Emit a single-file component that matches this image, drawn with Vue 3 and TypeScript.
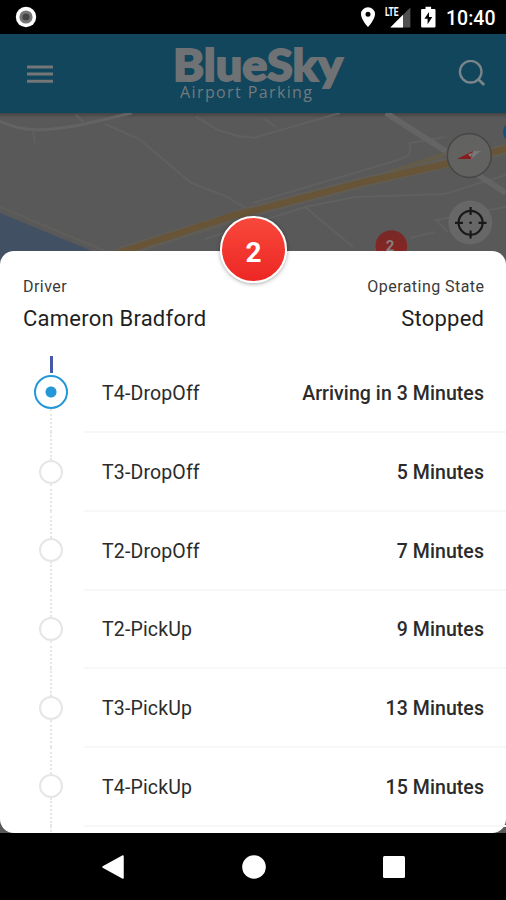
<script setup lang="ts">
interface Stop {
  name: string
  eta: string
}

const stops: Stop[] = [
  { name: 'T4-DropOff', eta: 'Arriving in 3 Minutes' },
  { name: 'T3-DropOff', eta: '5 Minutes' },
  { name: 'T2-DropOff', eta: '7 Minutes' },
  { name: 'T2-PickUp', eta: '9 Minutes' },
  { name: 'T3-PickUp', eta: '13 Minutes' },
  { name: 'T4-PickUp', eta: '15 Minutes' },
]
</script>

<template>
  <div class="screen">
    <div class="status">
      <svg class="record" width="22" height="22" viewBox="0 0 22 22">
        <circle cx="11" cy="11" r="10.2" fill="#fff" />
        <circle cx="11" cy="11" r="6.6" fill="#777" />
        <circle cx="11" cy="11" r="3.6" fill="#444" />
      </svg>
      <div class="status-right">
        <svg width="80" height="34" viewBox="0 0 80 34">
          <path d="M8 7.2a7 7 0 0 0-7 7c0 5.2 7 12.9 7 12.9s7-7.7 7-12.9a7 7 0 0 0-7-7zm0 9.5a2.500 2.500 0 1 1 0-5 2.500 2.500 0 0 1 0 5z" fill="#fff" />
          <path d="M50.400 7.400V27.500H30.300z" fill="#505050" />
          <path d="M43 14.800V27.500H30.300z" fill="#fff" />
          <path d="M24 6h15v11H24z" fill="#000" />
          <text x="25" y="15.900" class="lte" textLength="13.500" lengthAdjust="spacingAndGlyphs">LTE</text>
          <path d="M65.500 6.700h5.600v2.200h3.200q1.200 0 1.200 1.200v16.200q0 1.200-1.200 1.200H62.300q-1.200 0-1.200-1.200V10.100q0-1.200 1.200-1.200h3.200z" fill="#fff" />
          <path d="M69 12l-4.600 6.800h3.200v5.500l4.700-7.300h-3.300z" fill="#000" />
        </svg>
        <span class="clock">10:40</span>
      </div>
    </div>

    <header class="bar">
      <svg width="26" height="20" viewBox="0 0 26 20">
        <path d="M0 2.900h26M0 10.100h26M0 17.300h26" stroke="#747678" stroke-width="3" />
      </svg>
      <svg class="logo" width="172" height="64" viewBox="0 0 172 64">
        <text x="-2" y="39" class="brand" textLength="170" lengthAdjust="spacingAndGlyphs">BlueSky</text>
        <text x="5" y="55.500" class="tagline" textLength="132" lengthAdjust="spacing">Airport Parking</text>
      </svg>
      <svg width="28" height="28" viewBox="0 0 28 28" fill="none" stroke="#7b8589" stroke-width="2.300">
        <circle cx="12.700" cy="11.700" r="10.800" />
        <path d="M19.500 18.500l6.700 6.400" stroke-width="2.800" />
      </svg>
    </header>

    <div class="map">
      <svg width="506" height="160" viewBox="0 113 506 160" fill="none">
        <defs>
          <linearGradient id="shade" x1="0" y1="0" x2="0" y2="1">
            <stop offset="0" stop-color="#444" />
            <stop offset="1" stop-color="#595959" />
          </linearGradient>
          <linearGradient id="pin" x1="0" y1="0" x2="0" y2="1">
            <stop offset="0" stop-color="#772927" />
            <stop offset="1" stop-color="#8c2420" />
          </linearGradient>
        </defs>
        <path d="M0 113h506v160H0z" fill="#595959" />
        <path d="M0 113h506v5H0z" fill="url(#shade)" />
        <path d="M0 213L92 251V273H0z" fill="#425064" />
        <path d="M0 207L105 251" stroke="#605e5a" stroke-width="2" />
        <path d="M0 121C22 132 45 132 85 124L132 113" stroke="#636363" stroke-width="3" />
        <path d="M33 131l2 12M76 115l8 8M105 124l34 15 12 10 40 34 34 13 21 12 12 6M196 117l22 13 20 6 20 2" stroke="#606060" stroke-width="2" />
        <path d="M253 138L340 113M253 203L398 160q12-3 12-10v-7l35-6M305 207l50-10 90-3 61-19M305 207l48 40M205 239l100-32M410 238l25-6M506 207l-70 13 12 12M264 119l12 8" stroke="#606060" stroke-width="2" />
        <path d="M386 113L444 150 480 176 506 193" stroke="#646464" stroke-width="6" />
        <path d="M118 253L253 211 360 183 445 163 506 149" stroke="#605d57" stroke-width="11" />
        <path d="M118 253L235 215 253 211 360 183 450 163 506 149" stroke="#685538" stroke-width="6.500" />
        <path d="M390 172L445 154" stroke="#645c4b" stroke-width="4" />
        <circle cx="514" cy="132" r="11" fill="#0b5580" />
        <circle cx="469.300" cy="155.500" r="22" fill="#626260" stroke="#464646" stroke-width="1.500" />
        <path d="M457 159l16-8-2 8z" fill="#861e20" />
        <path d="M473 151l8 0-10 8z" fill="#777" />
        <path d="M468 154.500l4-1.500-1 4z" fill="#858585" />
        <circle cx="470.300" cy="222.500" r="22" fill="#676767" />
        <g stroke="#191919" stroke-width="2.200">
          <circle cx="470.600" cy="222.800" r="12" />
          <path d="M470.600 207v8M470.600 230.500v8M455 222.800h8M478.500 222.800h8" />
        </g>
        <circle cx="470.600" cy="222.800" r="1.300" fill="#191919" />
        <circle cx="391.300" cy="246" r="15.800" fill="url(#pin)" />
        <text x="390" y="250.500" class="pin-label" text-anchor="middle">2</text>
      </svg>
    </div>

    <main class="sheet">
      <div class="badge">2</div>
      <section class="summary">
        <div class="fact">
          <span class="caption">Driver</span>
          <span class="value">Cameron Bradford</span>
        </div>
        <div class="fact end">
          <span class="caption">Operating State</span>
          <span class="value">Stopped</span>
        </div>
      </section>
      <ul class="stops">
        <li v-for="(stop, i) in stops" :key="stop.name" class="stop">
          <div class="rail">
            <span class="line" :class="{ passed: i === 0 }"></span>
            <span class="dot" :class="{ active: i === 0 }"></span>
            <span class="line"></span>
          </div>
          <div class="detail">
            <span class="name">{{ stop.name }}</span>
            <span class="eta">{{ stop.eta }}</span>
          </div>
        </li>
        <li class="stop">
          <div class="rail"><span class="line"></span></div>
        </li>
      </ul>
    </main>

    <nav class="nav">
      <svg width="24" height="26" viewBox="0 0 24 26"><path d="M22 2v22L2 13z" fill="#fff" stroke="#fff" stroke-width="1.500" stroke-linejoin="round" /></svg>
      <svg width="24" height="24" viewBox="0 0 24 24"><circle cx="12" cy="12" r="11.800" fill="#fff" /></svg>
      <svg width="22" height="22" viewBox="0 0 22 22"><rect width="22" height="22" rx="1.500" fill="#fff" /></svg>
    </nav>
  </div>
</template>

<style>
body {
  margin: 0;
}
</style>

<style scoped>
.screen {
  width: 506px;
  height: 900px;
  display: flex;
  flex-direction: column;
  overflow: hidden;
  background: #595959;
  font-family: Roboto, "Liberation Sans", sans-serif;
}
svg {
  display: block;
  flex: none;
}
.status {
  height: 34px;
  flex: none;
  display: flex;
  align-items: center;
  justify-content: space-between;
  background: #000;
  padding: 0 11px 0 15px;
}
.status-right {
  display: flex;
  align-items: center;
  gap: 6px;
}
.lte {
  font-size: 12px;
  font-weight: 700;
  fill: #fff;
}
.clock {
  width: 49px;
  font-size: 19.5px;
  font-weight: 500;
  line-height: 34px;
  padding-top: 3px;
  color: #fff;
}
.bar {
  height: 79px;
  flex: none;
  box-sizing: border-box;
  display: flex;
  align-items: center;
  justify-content: space-between;
  background: #11465d;
  padding: 0 20px 0 27px;
}
.logo {
  margin-right: -10px;
  overflow: visible;
}
.brand {
  font-family: Lato, "Open Sans", sans-serif;
  font-weight: 900;
  font-size: 44px;
  fill: #6f7274;
  stroke: #6f7274;
  stroke-width: 1.8px;
}
.tagline {
  font-family: "Open Sans", sans-serif;
  font-size: 16px;
  fill: #737a7e;
}
.pin-label {
  font-size: 15px;
  font-weight: 700;
  fill: #858080;
}
.map {
  height: 137.5px;
  flex: none;
}
.sheet {
  position: relative;
  height: 582.500px;
  flex: none;
  box-sizing: border-box;
  background: #fff;
  border-radius: 14px;
  display: flex;
  flex-direction: column;
}
.badge {
  position: absolute;
  left: 220px;
  top: -35px;
  width: 67px;
  height: 67px;
  box-sizing: border-box;
  border: 2.500px solid #fff;
  border-radius: 50%;
  background: linear-gradient(#f8483c, #ed2724);
  box-shadow: 0 1px 4px rgba(0, 0, 0, 0.35);
  color: #fff;
  font-size: 28px;
  font-weight: 700;
  line-height: 69px;
  text-align: center;
}
.summary {
  height: 103px;
  flex: none;
  box-sizing: border-box;
  display: flex;
  justify-content: space-between;
  padding: 25px 22px 0 23px;
}
.fact {
  display: flex;
  flex-direction: column;
}
.end {
  align-items: flex-end;
}
.caption {
  font-size: 16px;
  letter-spacing: 0.450px;
  margin-right: -0.450px;
  line-height: 21px;
  color: #3a3a3a;
}
.value {
  font-size: 22px;
  letter-spacing: 0.230px;
  margin-right: -0.230px;
  line-height: 30px;
  padding-top: 7px;
  color: #1f1f1f;
}
.stops {
  list-style: none;
  margin: 0;
  padding: 0;
  flex: 1;
  overflow: hidden;
}
.stop {
  height: 78.700px;
  display: flex;
}
.rail {
  width: 34px;
  margin-left: 34px;
  display: flex;
  flex-direction: column;
  align-items: center;
}
.line {
  flex: 1;
  width: 0;
  border-left: 2px dotted #e6e6e6;
}
.line.passed {
  flex: none;
  height: 17px;
  width: 3px;
  border: 0;
  background: #4658a8;
  margin: 2px 0 2px;
}
.dot {
  width: 24px;
  height: 24px;
  box-sizing: border-box;
  border: 2px solid #e6e6e6;
  border-radius: 50%;
}
.dot.active {
  width: 34px;
  height: 34px;
  border: 2.500px solid #2497d8;
  background: radial-gradient(circle, #2497d8 5px, #fff 6px);
}
.detail {
  flex: 1;
  margin: 1px 0 -1px 16px;
  padding: 2px 22px 0 18px;
  box-sizing: border-box;
  display: flex;
  align-items: center;
  justify-content: space-between;
  border-bottom: 2px solid #f7f7f7;
  color: #2b2b2b;
  font-size: 19.500px;
}
.name {
  letter-spacing: 0.150px;
}
.eta {
  font-weight: 500;
  letter-spacing: 0.070px;
}
.nav {
  height: 67px;
  flex: none;
  box-sizing: border-box;
  display: flex;
  align-items: center;
  justify-content: space-between;
  background: #000;
  padding: 0 101px;
}
</style>
